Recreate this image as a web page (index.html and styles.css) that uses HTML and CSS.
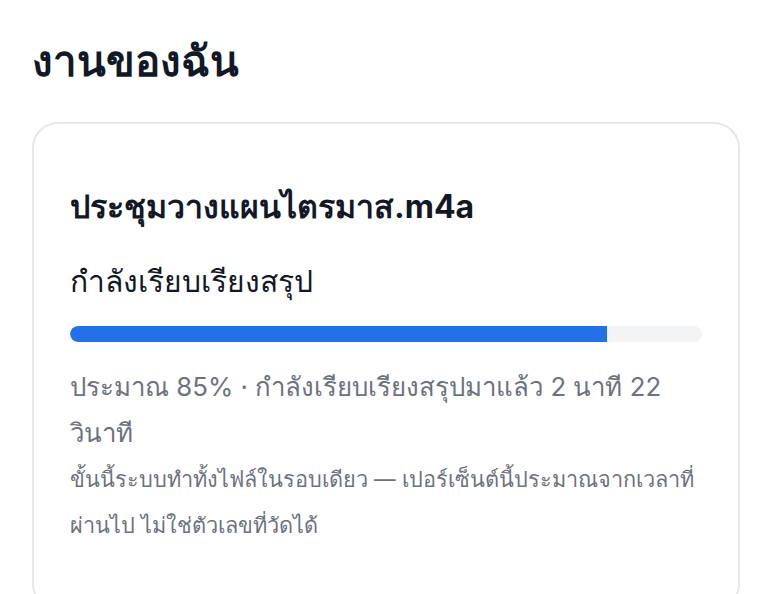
FILE: index.html
```html
<!DOCTYPE html>
<html lang="th">
<head>
<meta charset="utf-8">
<link rel="stylesheet" href="styles.css">
</head>
<body>
<main class="page">
  <h1 class="page-title">งานของฉัน</h1>
  <section class="card">
    <h2 class="file-name">ประชุมวางแผนไตรมาส.m4a</h2>
    <div class="status">กำลังเรียบเรียงสรุป</div>
    <div class="track"><div class="fill" style="width:85%"></div></div>
    <p class="meta">ประมาณ 85% · กำลังเรียบเรียงสรุปมาแล้ว 2 นาที 22 วินาที</p>
    <p class="note">ขั้นนี้ระบบทำทั้งไฟล์ในรอบเดียว — เปอร์เซ็นต์นี้ประมาณจากเวลาที่ผ่านไป ไม่ใช่ตัวเลขที่วัดได้</p>
  </section>
</main>
</body>
</html>
```
FILE: styles.css
```css
html, body {
  margin: 0;
  padding: 0;
  background: #ffffff;
}
body {
  font-family: Inter, "Noto Sans", sans-serif;
  color: #111827;
}
.page {
  padding: 31px 32px 0 32px;
}
.page-title {
  margin: 0 0 32px 0;
  font-size: 42px;
  font-weight: 700;
  line-height: 59px;
}
.card {
  border: 2px solid #e5e7eb;
  border-radius: 26px;
  padding: 60px 36px 60px 36px;
}
.file-name {
  margin: 0;
  font-size: 32px;
  font-weight: 700;
  line-height: 45px;
}
.status {
  margin-top: 31px;
  font-size: 30px;
  font-weight: 550;
  line-height: 42px;
}
.track {
  margin-top: 24px;
  height: 16px;
  background: #f3f4f6;
  border-radius: 8px;
  overflow: hidden;
}
.fill {
  height: 100%;
  background: #2271e6;
  border-radius: 8px 0 0 8px;
}
.meta {
  margin: 22px 0 0 0;
  font-size: 25.8px;
  line-height: 46px;
  color: #6b7280;
}
.note {
  margin: 0;
  font-size: 21.7px;
  line-height: 46px;
  color: #6b7280;
}
```
